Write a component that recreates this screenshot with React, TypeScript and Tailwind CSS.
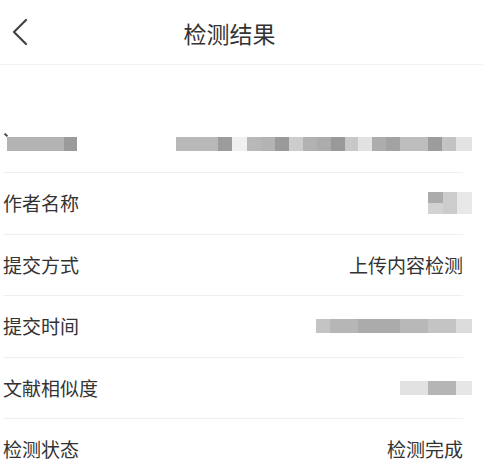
import React from "react";

type Cell = { w: string; c: string };

// pixelated (blurred) placeholder values
const titleLeft: Cell[] = [
  { w: "w-[57px]", c: "bg-[#b3b3b3]" },
  { w: "w-[13px]", c: "bg-[#9b9b9b]" },
];

const titleRight: Cell[] = [
  { w: "w-[42px]", c: "bg-[#b8b8b8]" },
  { w: "w-[14px]", c: "bg-[#9c9c9c]" },
  { w: "w-[15px]", c: "bg-[#f0f0f0]" },
  { w: "w-[14px]", c: "bg-[#b8b8b8]" },
  { w: "w-[14px]", c: "bg-[#b3b3b3]" },
  { w: "w-[14px]", c: "bg-[#9a9a9a]" },
  { w: "w-[14px]", c: "bg-[#cdcdcd]" },
  { w: "w-[14px]", c: "bg-[#b2b2b2]" },
  { w: "w-[14px]", c: "bg-[#acacac]" },
  { w: "w-[14px]", c: "bg-[#999999]" },
  { w: "w-[13px]", c: "bg-[#c8c8c8]" },
  { w: "w-[14px]", c: "bg-[#e2e2e2]" },
  { w: "w-[14px]", c: "bg-[#adadad]" },
  { w: "w-[14px]", c: "bg-[#a3a3a3]" },
  { w: "w-[28px]", c: "bg-[#bdbdbd]" },
  { w: "w-[14px]", c: "bg-[#9c9c9c]" },
  { w: "w-[14px]", c: "bg-[#c3c3c3]" },
  { w: "w-[16px]", c: "bg-[#e3e3e3]" },
];

const timeCells: Cell[] = [
  { w: "w-[14px]", c: "bg-[#c4c4c4]" },
  { w: "w-[28px]", c: "bg-[#b6b6b6]" },
  { w: "w-[42px]", c: "bg-[#ababab]" },
  { w: "w-[28px]", c: "bg-[#b8b8b8]" },
  { w: "w-[28px]", c: "bg-[#c4c4c4]" },
  { w: "w-[16px]", c: "bg-[#dcdcdc]" },
];

const simCells: Cell[] = [
  { w: "w-[28px]", c: "bg-[#e2e2e2]" },
  { w: "w-[28px]", c: "bg-[#b5b5b5]" },
  { w: "w-[16px]", c: "bg-[#e6e6e6]" },
];

function Pixels({ cells, h = "h-[14px]" }: { cells: Cell[]; h?: string }) {
  return (
    <div className="flex">
      {cells.map((cell, i) => (
        <div key={i} className={`${cell.w} ${h} ${cell.c}`} />
      ))}
    </div>
  );
}

function AuthorPixels() {
  return (
    <div className="flex -mr-[9px]">
      <div className="flex flex-col w-[15px]">
        <div className="h-[11px] bg-[#ababab]" />
        <div className="h-[11px] bg-[#d2d2d2]" />
      </div>
      <div className="w-[14px] h-[22px] bg-[#cccccc]" />
      <div className="w-[15px] h-[22px] bg-[#e8e8e8]" />
    </div>
  );
}

function Row({ label, children }: { label: string; children?: React.ReactNode }) {
  return (
    <div className="h-[61.5px] flex items-center justify-between border-t border-[#efefef]">
      <span className="text-[19px] text-[#333333]">{label}</span>
      {children}
    </div>
  );
}

export default function App() {
  return (
    <div
      className="w-[483px] h-[476px] bg-white overflow-hidden"
      style={{ fontFamily: '"Noto Sans CJK SC", "Noto Sans", sans-serif' }}
    >
      <header className="h-[65px] grid grid-cols-[60px_1fr_84px] items-center border-b border-[#f2f2f2]">
        <button className="pl-[11px] h-full flex items-center">
          <svg width="18" height="28" viewBox="0 0 18 28" fill="none">
            <path d="M15 2 L3 14 L15 26" stroke="#444444" strokeWidth="2.2" strokeLinecap="round" strokeLinejoin="round" />
          </svg>
        </button>
        <h1 className="text-center text-[23px] text-[#333333] leading-none pt-[2px]">检测结果</h1>
        <div />
      </header>

      <div className="ml-[3px] mr-[20px]">
        <div className="h-[107px] pt-[72px] flex justify-between relative">
          <div className="absolute left-[2px] top-[68px] w-[2px] h-[4px] bg-[#444444] -rotate-45" />
          <div className="ml-[4px]">
            <Pixels cells={titleLeft} />
          </div>
          <div className="-mr-[9px]">
            <Pixels cells={titleRight} />
          </div>
        </div>

        <Row label="作者名称">
          <AuthorPixels />
        </Row>
        <Row label="提交方式">
          <span className="text-[19px] text-[#333333]">上传内容检测</span>
        </Row>
        <Row label="提交时间">
          <div className="-mr-[9px]">
            <Pixels cells={timeCells} />
          </div>
        </Row>
        <Row label="文献相似度">
          <div className="-mr-[9px]">
            <Pixels cells={simCells} />
          </div>
        </Row>
        <Row label="检测状态">
          <span className="text-[19px] text-[#333333]">检测完成</span>
        </Row>
      </div>
    </div>
  );
}
